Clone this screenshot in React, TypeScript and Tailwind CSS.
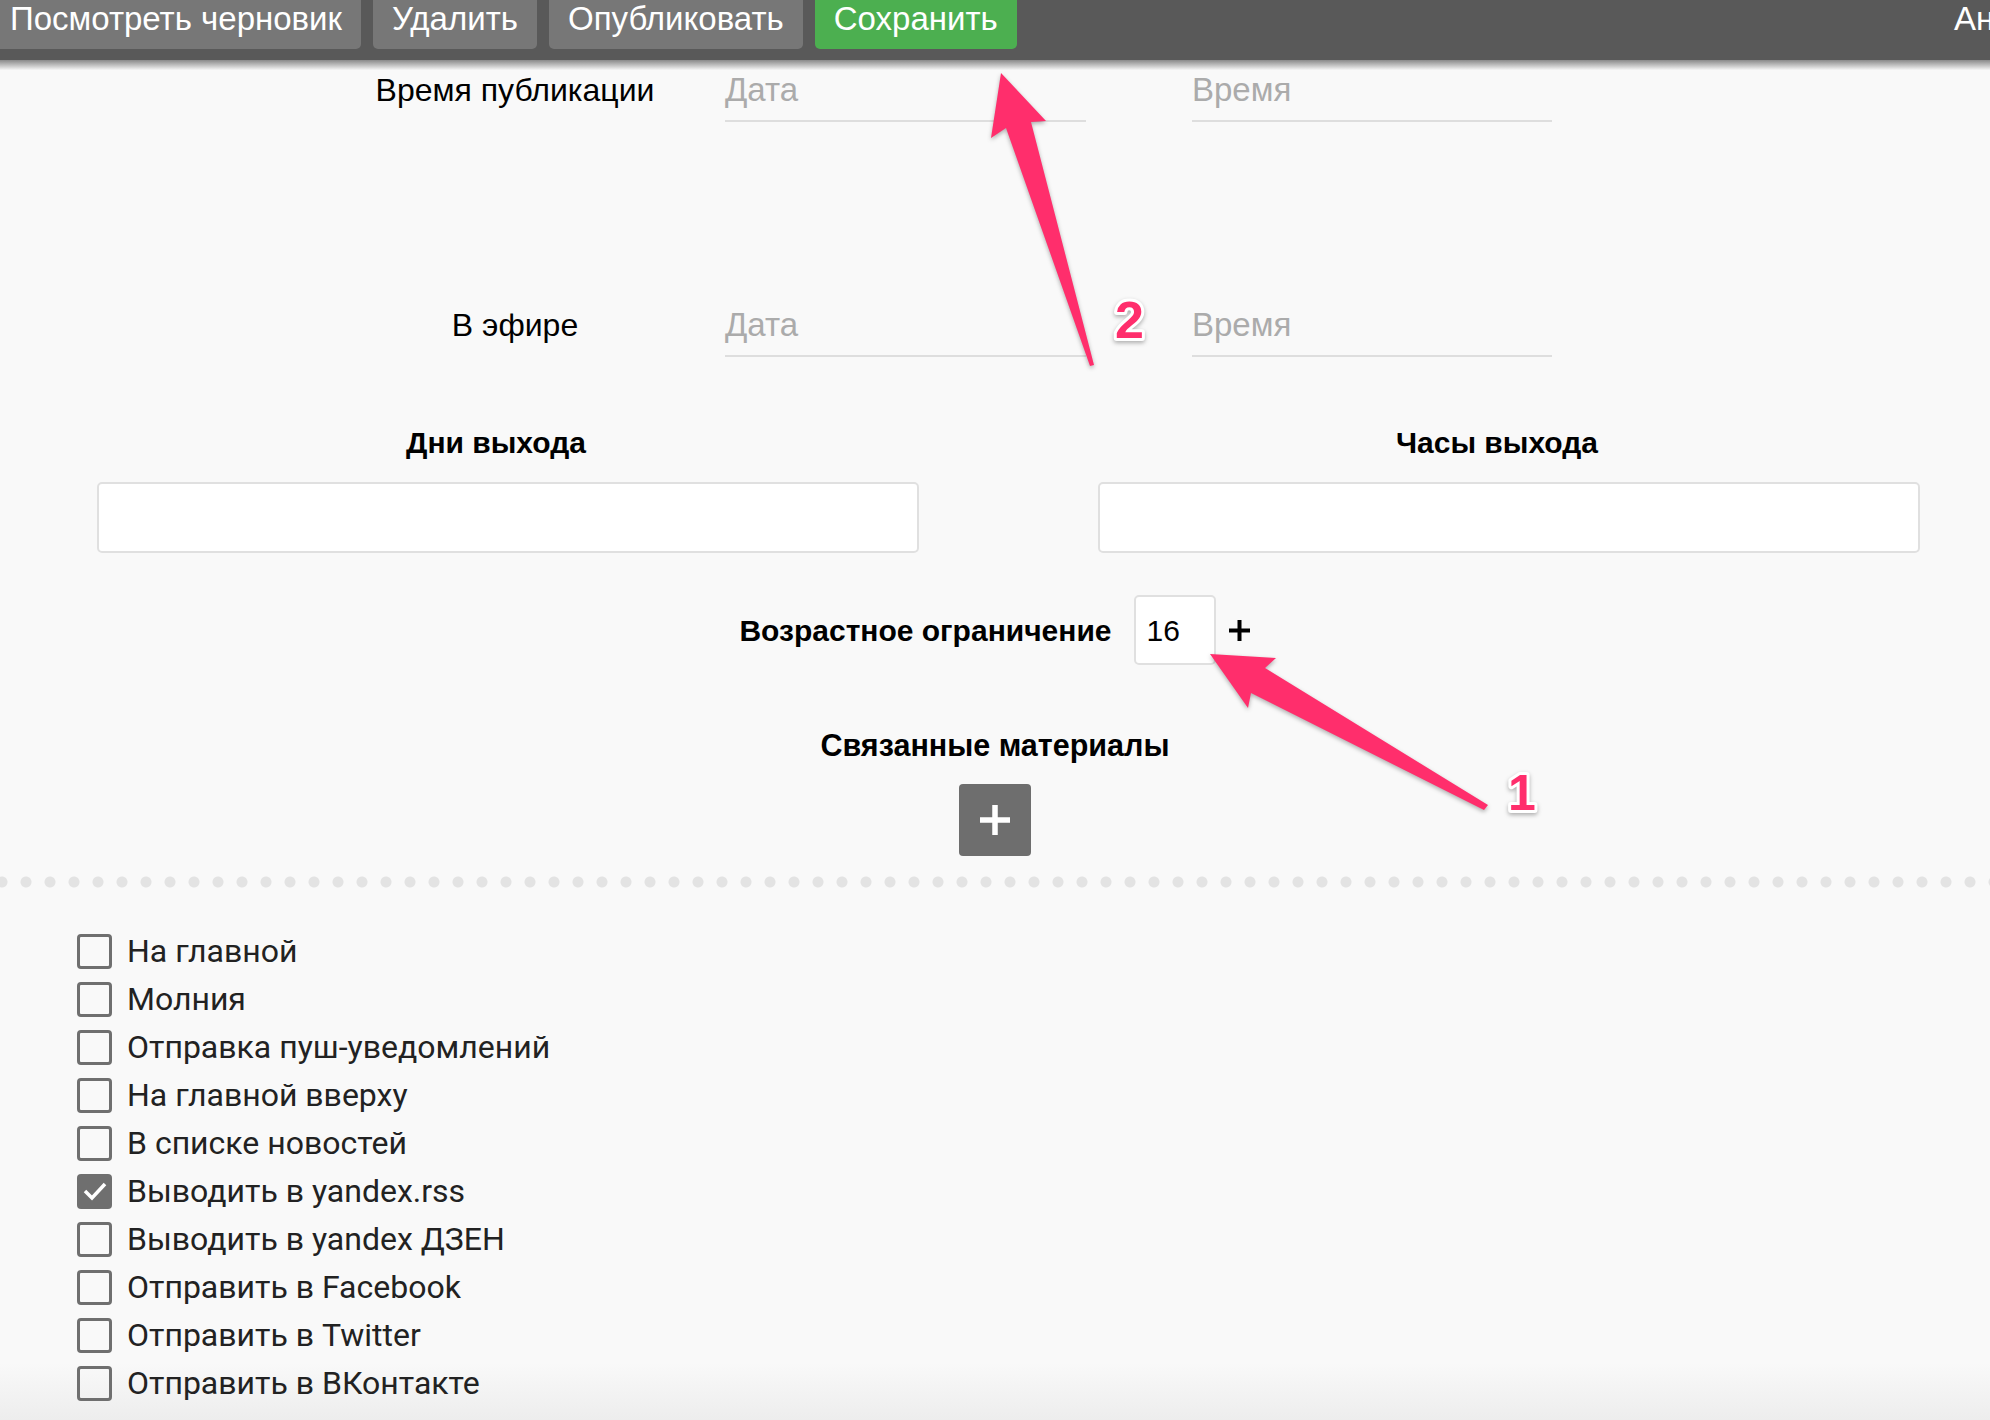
import React from 'react';

const flags: [string, boolean][] = [
  ['На главной', false],
  ['Молния', false],
  ['Отправка пуш-уведомлений', false],
  ['На главной вверху', false],
  ['В списке новостей', false],
  ['Выводить в yandex.rss', true],
  ['Выводить в yandex ДЗЕН', false],
  ['Отправить в Facebook', false],
  ['Отправить в Twitter', false],
  ['Отправить в ВКонтакте', false],
];

const ToolbarButton = ({ label, green, className = '' }: { label: string; green?: boolean; className?: string }) => (
  <div
    className={`h-[49px] px-[19px] rounded-b-[5px] text-white text-[33px] leading-[38px] whitespace-nowrap ${
      green ? 'bg-[#4caf50]' : 'bg-[#777777]'
    } ${className}`}
  >
    {label}
  </div>
);

const DateField = ({ placeholder, className }: { placeholder: string; className: string }) => (
  <div className={`h-[52px] border-b-2 border-[#dedede] text-[33px] leading-[40px] text-[#ababab] ${className}`}>
    {placeholder}
  </div>
);

const TimeRow = ({ label }: { label: string }) => (
  <div className="flex ml-[305px]">
    <div className="w-[420px] h-[40px] text-center text-[32px] leading-[40px] text-black whitespace-nowrap">{label}</div>
    <DateField placeholder="Дата" className="w-[361px]" />
    <DateField placeholder="Время" className="w-[360px] ml-[106px]" />
  </div>
);

const Check = ({ label, checked }: { label: string; checked: boolean }) => (
  <div className="flex items-center h-[48px] gap-[15px]">
    {checked ? (
      <div className="w-[35px] h-[35px] rounded-[4px] bg-[#6f6f6f] flex items-center justify-center">
        <svg width="26" height="22" viewBox="0 0 26 22">
          <path d="M3 11 L10 18 L23 4" fill="none" stroke="white" strokeWidth="3.5" />
        </svg>
      </div>
    ) : (
      <div className="w-[35px] h-[35px] rounded-[4px] border-[3px] border-[#6f6f6f]" />
    )}
    <span className="font-[Roboto,sans-serif] text-[32px] text-[#222222]">{label}</span>
  </div>
);

export default function App() {
  return (
    <div className="relative w-[1990px] h-[1420px] overflow-hidden bg-[linear-gradient(to_bottom,#f9f9f9_1363px,#ededed_1420px)] font-['Liberation_Sans',Arial,sans-serif]">
      {/* top bar */}
      <div className="h-[60px] bg-[#595959] flex items-start gap-[12px] overflow-hidden relative">
        <ToolbarButton label="Посмотреть черновик" className="-ml-[9px]" />
        <ToolbarButton label="Удалить" />
        <ToolbarButton label="Опубликовать" />
        <ToolbarButton label="Сохранить" green />
        <div className="absolute left-[1954px] top-0 text-white text-[33px] leading-[38px] whitespace-nowrap">Анна Петрова</div>
      </div>
      <div className="h-[10px] bg-linear-to-b from-[#8a8a8a] to-[#f6f6f6]" />

      {/* publication time */}
      <TimeRow label="Время публикации" />
      <div className="h-[183px]" />
      <TimeRow label="В эфире" />

      {/* days / hours */}
      <div className="flex gap-[179px] ml-[97px] mt-[66px]">
        {['Дни выхода', 'Часы выхода'].map((t) => (
          <div key={t} className="w-[822px] flex flex-col gap-[19px]">
            <div className="text-center pr-[24px] text-[30px] leading-[40px] font-bold text-black">{t}</div>
            <div className="h-[71px] bg-white border-2 border-[#e0e0e0] rounded-[5px]" />
          </div>
        ))}
      </div>

      {/* age limit */}
      <div className="flex items-center justify-center mt-[42px] h-[70px]">
        <span className="text-[30px] font-bold text-black">Возрастное ограничение</span>
        <div className="ml-[22px] w-[82px] h-[70px] bg-white border-2 border-[#e0e0e0] rounded-[5px] pl-[11px] flex items-center text-[30px] text-black">
          16
        </div>
        <svg className="ml-[12px]" width="23" height="23" viewBox="0 0 23 23">
          <path d="M11.5 1 V22 M1 11.5 H22" stroke="black" strokeWidth="4" />
        </svg>
      </div>

      {/* related */}
      <div className="flex flex-col items-center mt-[60px] gap-[19px]">
        <div className="text-[30.5px] leading-[40px] font-bold text-black">Связанные материалы</div>
        <div className="w-[72px] h-[72px] bg-[#6e6e6e] rounded-[4px] flex items-center justify-center">
          <svg width="32" height="32" viewBox="0 0 32 32">
            <path d="M16 1 V31 M1 16 H31" stroke="white" strokeWidth="5.5" />
          </svg>
        </div>
      </div>

      {/* dotted divider */}
      <div className="mt-[20px] h-[12px] bg-[radial-gradient(circle,#e3e3e3_5px,transparent_6px)] bg-[length:24px_12px] bg-[position:-10px_0px] bg-repeat-x" />

      {/* flags */}
      <div className="ml-[77px] mt-[39px] flex flex-col">
        {flags.map(([l, c]) => (
          <Check key={l} label={l} checked={c} />
        ))}
      </div>

      {/* annotation arrows */}
      <svg
        className="absolute inset-0 pointer-events-none drop-shadow-[0_2px_2px_rgba(0,0,0,0.3)]"
        width="1990"
        height="1420"
        viewBox="0 0 1990 1420"
      >
        <polygon points="1001,73 1046,121 1031,122 1094,365 1090,366 1006,128 991,138" fill="#ff2e6c" />
        <polygon points="1210,654 1276,658 1265,668 1488,805 1484,810 1251,693 1248,708" fill="#ff2e6c" />
        <text
          x="1115"
          y="338"
          fontSize="52"
          fontWeight="bold"
          fontFamily="Liberation Sans, Arial, sans-serif"
          fill="#ff2e6c"
          stroke="white"
          strokeWidth="6"
          strokeLinejoin="round"
          paintOrder="stroke"
        >
          2
        </text>
        <text
          x="1508"
          y="810"
          fontSize="50"
          fontWeight="bold"
          fontFamily="Liberation Sans, Arial, sans-serif"
          fill="#ff2e6c"
          stroke="white"
          strokeWidth="6"
          strokeLinejoin="round"
          paintOrder="stroke"
        >
          1
        </text>
      </svg>
    </div>
  );
}
